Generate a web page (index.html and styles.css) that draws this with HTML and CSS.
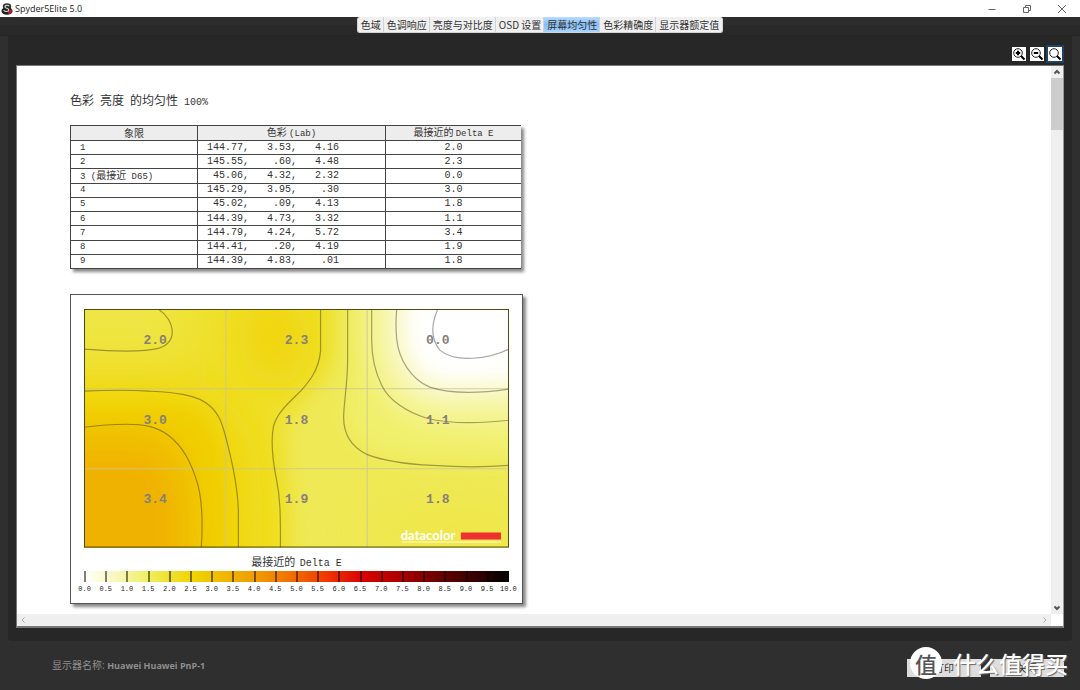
FILE: index.html
```html
<!DOCTYPE html>
<html lang="zh-CN">
<head>
<meta charset="utf-8">
<title>Spyder5Elite 5.0</title>
<link rel="stylesheet" href="styles.css">
</head>
<body>
<header class="titlebar">
  <svg class="app-icon" viewBox="0 0 12 12" aria-hidden="true">
    <ellipse cx="6" cy="3.4" rx="4.2" ry="3.2" fill="#333"/>
    <ellipse cx="6" cy="8" rx="5.6" ry="3.8" fill="#222"/>
    <path d="M7 8.5 L11 6 L10.5 10 L7.5 11.4Z" fill="#b3202c"/>
    <path d="M8.2 3 C6 1.6 3.4 2.6 4.2 4.2 C5 5.6 8 5.2 7.8 7.2 C7.4 9 4.4 8.8 2.6 7.4" fill="none" stroke="#ddd" stroke-width="1.1"/>
  </svg>
  <h1 class="app-name">Spyder5Elite 5.0</h1>
  <div class="window-buttons">
    <button class="window-button" aria-label="最小化"><svg viewBox="0 0 10 10"><path d="M1.500 5.500H8.500"/></svg></button>
    <button class="window-button" aria-label="还原"><svg viewBox="0 0 10 10"><path d="M1.500 3.500H6.500V8.500H1.500ZM3.500 3.500V1.500H8.500V6.500H6.500"/></svg></button>
    <button class="window-button" aria-label="关闭窗口"><svg viewBox="0 0 10 10"><path d="M1 1L9 9M9 1L1 9"/></svg></button>
  </div>
</header>

<nav class="tabstrip">
  <div class="tabs" role="tablist">
    <button class="tab" role="tab">色域</button>
    <button class="tab" role="tab">色调响应</button>
    <button class="tab" role="tab">亮度与对比度</button>
    <button class="tab" role="tab">OSD 设置</button>
    <button class="tab tab-active" role="tab" aria-selected="true">屏幕均匀性</button>
    <button class="tab" role="tab">色彩精确度</button>
    <button class="tab" role="tab">显示器额定值</button>
  </div>
</nav>

<main class="panel">
  <div class="toolbar">
    <button class="tool" aria-label="放大"><svg viewBox="0 0 14 14"><circle cx="6" cy="6" r="4.300"/><path class="thick" d="M9 9L12.500 12.500M3.800 6H8.200M6 3.800V8.200"/></svg></button>
    <button class="tool" aria-label="缩小"><svg viewBox="0 0 14 14"><circle cx="6" cy="6" r="4.300"/><path class="thick" d="M9 9L12.500 12.500M3.800 6H8.200"/></svg></button>
    <button class="tool tool-active" aria-label="实际大小"><svg viewBox="0 0 14 14"><circle cx="6" cy="6" r="4.300"/><path class="thick" d="M9 9L12.500 12.500"/></svg></button>
  </div>

  <section class="viewer">
    <div class="report">
      <h2 class="report-title"><span>色彩</span> <span>亮度</span> <span>的均匀性</span> 100%</h2>

      <table class="readings">
        <thead>
          <tr><th class="col-zone">象限</th><th class="col-lab">色彩 <span class="latin-small">(Lab)</span></th><th>最接近的 <span class="latin-small">Delta E</span></th></tr>
        </thead>
        <tbody>
          <tr><td>1</td><td class="lab">144.77,   3.53,   4.16</td><td class="delta">2.0</td></tr>
          <tr><td>2</td><td class="lab">145.55,    .60,   4.48</td><td class="delta">2.3</td></tr>
          <tr><td>3 (<span class="cjk">最接近</span> D65)</td><td class="lab"> 45.06,   4.32,   2.32</td><td class="delta">0.0</td></tr>
          <tr><td>4</td><td class="lab">145.29,   3.95,    .30</td><td class="delta">3.0</td></tr>
          <tr><td>5</td><td class="lab"> 45.02,    .09,   4.13</td><td class="delta">1.8</td></tr>
          <tr><td>6</td><td class="lab">144.39,   4.73,   3.32</td><td class="delta">1.1</td></tr>
          <tr><td>7</td><td class="lab">144.79,   4.24,   5.72</td><td class="delta">3.4</td></tr>
          <tr><td>8</td><td class="lab">144.41,    .20,   4.19</td><td class="delta">1.9</td></tr>
          <tr><td>9</td><td class="lab">144.39,   4.83,    .01</td><td class="delta">1.8</td></tr>
        </tbody>
      </table>

      <figure class="chart">
        <svg class="map" viewBox="0 0 424 238" role="img" aria-label="屏幕均匀性">
          <defs>
            <filter id="soft" filterUnits="userSpaceOnUse" x="-80" y="-80" width="584" height="398"><feGaussianBlur stdDeviation="10"/></filter>
            <filter id="softer" filterUnits="userSpaceOnUse" x="-80" y="-80" width="584" height="398"><feGaussianBlur stdDeviation="20"/></filter>
          </defs>
          <rect width="424" height="238" fill="#efe02c"/>
          <g filter="url(#softer)">
            <ellipse cx="190" cy="28" rx="36" ry="50" fill="#f0d60c"/>
            <path d="M-60 66H90C130 70 165 100 176 150L178 300H-60Z" fill="#f0d808"/>
            <path d="M-60 -60H96V44H-60Z" fill="#efe644"/>
          </g>
          <g filter="url(#soft)">
            <path d="M250 -60V42C246 66 232 78 222 88C208 102 203 108 202 120C200 138 204 160 206 175L208 300H500V-60Z" fill="#efe956"/>
            <path d="M267 -60V50C265 75 264 92 265 108C266 124 280 138 300 144C335 150 380 151 500 149V-60Z" fill="#f1f06c"/>
            <path d="M280 -60V31C282 66 292 92 318 108C342 122 390 124 500 121V-60Z" fill="#f4f389"/>
            <path d="M293 -60V26C295 62 312 90 342 98C370 104 400 101 500 98V-60Z" fill="#f7f6aa"/>
            <path d="M309 -60V24C311 60 330 80 350 84C372 88 398 84 500 82V-60Z" fill="#fafad0"/>
            <path d="M323 -60V24C325 50 336 68 358 70C382 73 404 69 500 64V-60Z" fill="#fff"/>
            <path d="M-60 95H65C88 96 108 97 119 107C129 118 133 132 136 142C141 160 144 180 144 210V300H-60Z" fill="#f0cd00"/>
            <path d="M-60 118H42C65 118 76 122 88 132C102 146 108 165 112 186L114 300H-60Z" fill="#f0bd00"/>
            <path d="M-60 146H48C72 148 86 168 89 200V300H-60Z" fill="#f0b200"/>
          </g>
          <ellipse cx="370" cy="220" rx="90" ry="26" fill="#efe640" opacity=".6" filter="url(#softer)"/>
          <path class="grid-lines" d="M141.500 0V238M282.500 0V238M0 79.500H424M0 159.500H424"/>
          <g class="contours">
            <path d="M0 40C25 42 60 43 75 39C84 36 88 31 88 23C88 14 82 5 74 0"/>
            <path d="M0 82C20 81 50 81 65 82C85 83 112 84 126 97C137 107 139 120 142 130C148 153 154 178 154 204V238"/>
            <path d="M0 118C15 116 28 115 42 115C60 115 72 117 84 126C100 138 107 155 112 170C118 188 119 208 117 238"/>
            <path d="M236 0V42C234 62 224 73 216 82C204 94 193 103 189 117C186 133 189 155 192 170C196 189 196 205 196 238"/>
            <path d="M263 0V50C263 75 259 95 259 108C259 125 266 137 282 145C300 152 325 155 348 156C375 158 400 158 424 156"/>
            <path d="M287 0V31C287 48 290 62 297 76C304 91 322 103 342 109C366 115 397 114 424 111"/>
            <path d="M312 0C311 10 311 20 312 30C314 50 326 70 345 78C366 85 396 84 424 80"/>
            <path d="M353 0C346 16 346 30 355 41C370 54 404 50 424 40"/>
          </g>
          <g class="zone-values">
            <text x="71" y="35">2.0</text><text x="212" y="35">2.3</text><text x="353" y="35">0.0</text>
            <text x="71" y="115">3.0</text><text x="212" y="115">1.8</text><text x="353" y="115">1.1</text>
            <text x="71" y="194">3.4</text><text x="212" y="194">1.9</text><text x="353" y="194">1.8</text>
          </g>
          <text class="brand" x="316" y="230">datacolor</text>
          <rect x="376" y="223" width="40" height="7" fill="#ee3030"/>
          <path d="M317 232.500H416" stroke="#fff" opacity=".8"/>
          <rect x=".5" y=".5" width="423" height="237" fill="none" stroke="#4d4a18"/>
        </svg>
        <figcaption class="scale-title">最接近的 <span class="latin">Delta E</span></figcaption>
        <div class="scale-bar"><i></i><i></i><i></i><i></i><i></i><i></i><i></i><i></i><i></i><i></i><i></i><i></i><i></i><i></i><i></i><i></i><i></i><i></i><i></i><i></i></div>
        <div class="scale-labels">
          <span>0.0</span><span>0.5</span><span>1.0</span><span>1.5</span><span>2.0</span><span>2.5</span><span>3.0</span><span>3.5</span><span>4.0</span><span>4.5</span><span>5.0</span><span>5.5</span><span>6.0</span><span>6.5</span><span>7.0</span><span>7.5</span><span>8.0</span><span>8.5</span><span>9.0</span><span>9.5</span><span>10.0</span>
        </div>
      </figure>
    </div>

    <div class="scroll-y">
      <svg viewBox="0 0 12 12"><path d="M3.500 7.500L6 5L8.500 7.500"/></svg>
      <div class="thumb"></div>
      <svg viewBox="0 0 12 12"><path d="M3.500 4.500L6 7L8.500 4.500"/></svg>
    </div>
    <div class="scroll-x">
      <svg viewBox="0 0 12 12"><path d="M7.500 3.500L5 6L7.500 8.500"/></svg>
      <svg viewBox="0 0 12 12"><path d="M4.500 3.500L7 6L4.500 8.500"/></svg>
    </div>
  </section>
</main>

<footer class="footer">
  <p class="display-name">显示器名称: <b>Huawei Huawei PnP-1</b></p>
  <div class="actions">
    <button class="action">打印</button>
    <button class="action">关闭</button>
  </div>
  <div class="watermark"><span class="watermark-badge">值</span><span>什么值得买</span></div>
</footer>
</body>
</html>
```
FILE: styles.css
```css
* { box-sizing: border-box; }

body {
  margin: 0;
  min-height: 100vh;
  display: flex;
  flex-direction: column;
  background: #2f2f2f;
  color: #333;
  font: 10px/14px "Open Sans", "Noto Sans CJK SC", sans-serif;
}

h1, h2, p, figure { margin: 0; font-weight: 400; }

button {
  padding: 0;
  border: 0;
  background: none;
  color: inherit;
  font: inherit;
}

svg { display: block; }

/* Title bar */
.titlebar {
  display: flex;
  align-items: center;
  height: 17px;
  padding: 0 8px 0 1px;
  background: #fff;
}
.app-icon { width: 12px; height: 12px; }
.app-name { margin-left: 2px; font-size: 9px; color: #222; }
.window-buttons { display: flex; gap: 15px; margin-left: auto; }
.window-button { width: 20px; height: 16px; display: grid; place-items: center; }
.window-button svg { width: 10px; height: 10px; fill: none; stroke: #666; }

/* Tabs */
.tabstrip {
  display: flex;
  justify-content: center;
  align-items: flex-start;
  height: 19px;
  background: linear-gradient(#2d2d2d 8px, #292929 8px);
  border-bottom: 1px solid #252525;
}
.tabs {
  display: flex;
  border: 1px solid #d4d4d4;
  border-top: 0;
  border-radius: 3px;
  background: #f0f0f0;
}
.tab { height: 15px; padding: 0 3px; line-height: 14px; font-family: "Noto Sans CJK SC", sans-serif; white-space: nowrap; }
.tab + .tab { box-shadow: -1px 0 #d2d2d2; }
.tab-active { background: linear-gradient(#b9dcff, #84bdf5 50%, #a9d5ff); }

/* Panel */
.panel {
  flex: 1;
  display: flex;
  flex-direction: column;
  margin: 0 8px;
  padding: 0 8px 13px;
  background: #272727;
  border-radius: 0 0 4px 4px;
}
.toolbar {
  display: flex;
  justify-content: flex-end;
  align-items: flex-end;
  height: 29px;
  padding-bottom: 2px;
}
.tool { padding: 2px; }
.tool svg { width: 14px; height: 14px; background: #fff; fill: none; stroke: #222; }
.tool .thick { stroke: #000; stroke-width: 2; }
.tool-active { background: #1f4263; }

/* Report viewer */
.viewer {
  flex: 1;
  display: grid;
  grid-template: 1fr 12px / 1fr 12px;
  border: 1px solid #777;
  border-right-color: #999;
  border-bottom-width: 2px;
  background: #fff;
}
.report { padding: 26px 53px 8px; font-family: "Liberation Mono", "Noto Sans CJK SC", monospace; }
.scroll-y, .scroll-x { display: flex; justify-content: space-between; background: #efefef; }
.scroll-y { flex-direction: column; }
.scroll-y svg, .scroll-x svg { flex: none; width: 12px; height: 12px; fill: none; }
.scroll-y svg { stroke: #555; stroke-width: 2; }
.scroll-x svg { stroke: #aaa; }
.thumb { height: 52px; margin-bottom: auto; background: #cdcdcd; }

.report-title { font: 10px/18px "Liberation Mono", monospace; }
.report-title span { font: 12px/16px "Noto Sans CJK SC", sans-serif; }
.scale-title .latin { margin-left: 2px; font: 10px/14px "Liberation Mono", monospace; }
.latin-small { font: 9px/12px "Liberation Mono", monospace; }

.readings {
  width: 451px;
  max-width: 100%;
  height: 144px;
  margin-top: 13px;
  border-collapse: collapse;
  table-layout: fixed;
  background: #fff;
  box-shadow: 3px 3px 3px #888;
}
.readings th, .readings td {
  height: 14px;
  padding: 0 9px;
  border: 1px solid #444;
  font-size: 9px;
  line-height: 12px;
  font-weight: 400;
  text-align: left;
}
.readings th:last-child, .readings td:last-child { border-right: 0; }
.readings th { background: #ededed; font-family: "Noto Sans CJK SC", sans-serif; font-size: 10px; text-align: center; }
.readings .lab { font-size: 10px; white-space: pre; }
.readings .delta { font-size: 10px; text-align: center; }
.cjk { font: 10px/10px "Noto Sans CJK SC", sans-serif; }
.col-zone { width: 127px; }
.col-lab { width: 188px; }

/* Uniformity chart */
.chart {
  width: 453px;
  max-width: 100%;
  margin-top: 25px;
  padding: 14px 13px 8px;
  border: 1px solid #555;
  background: #fff;
  box-shadow: 3px 3px 3px #888;
}
.map { width: 100%; }
.grid-lines { stroke: #c9c39a; fill: none; opacity: .8; }
.contours { fill: none; stroke: #000; stroke-opacity: .34; stroke-width: 1.200; }
.zone-values { fill: #858078; font: bold 13px "Liberation Mono", monospace; text-anchor: middle; }
.brand { fill: #fff; font: bold 13px Lato, sans-serif; }
.scale-title { margin-top: 5px; font: 11px/16px "Noto Sans CJK SC", sans-serif; text-align: center; }
.scale-bar {
  display: flex;
  height: 11px;
  border-right: 1px solid #000;
  background: linear-gradient(90deg, #fff, #f7f7b8 8%, #efef60 15%, #efe030 20%, #f0d400 26%, #f0b400 34%, #f09000 43%, #f06800 50%, #f03800 57%, #d80000 66%, #a80000 75%, #600000 85%, #240000 95%, #000);
}
.scale-bar i { flex: 1; border-left: 2px solid rgba(0, 0, 0, .5); }
.scale-labels { display: flex; margin: 1px -10px 0; font-size: 7px; line-height: 12px; color: #222; }
.scale-labels span { flex: 1 1 0; min-width: 0; display: flex; justify-content: center; }

/* Footer */
.footer {
  position: relative;
  display: flex;
  justify-content: space-between;
  align-items: center;
  height: 49px;
  padding: 4px 16px 4px 52px;
  color: #8e8e8e;
}
.display-name b { font-size: 9px; }
.actions { display: flex; gap: 9px; padding-top: 4px; }
.action { width: 74px; height: 18px; background: #ddd; color: #333; }
.watermark {
  position: absolute;
  right: 12px;
  top: 5px;
  display: flex;
  align-items: center;
  gap: 11px;
  color: #fff;
  font: 500 23px/34px "Noto Sans CJK SC", sans-serif;
  text-shadow: 1px 1px 1px #666;
  pointer-events: none;
}
.watermark-badge {
  width: 32px;
  height: 32px;
  border-radius: 50%;
  background: #fff;
  color: #555;
  font-size: 22px;
  line-height: 32px;
  text-align: center;
  text-shadow: none;
}
```
